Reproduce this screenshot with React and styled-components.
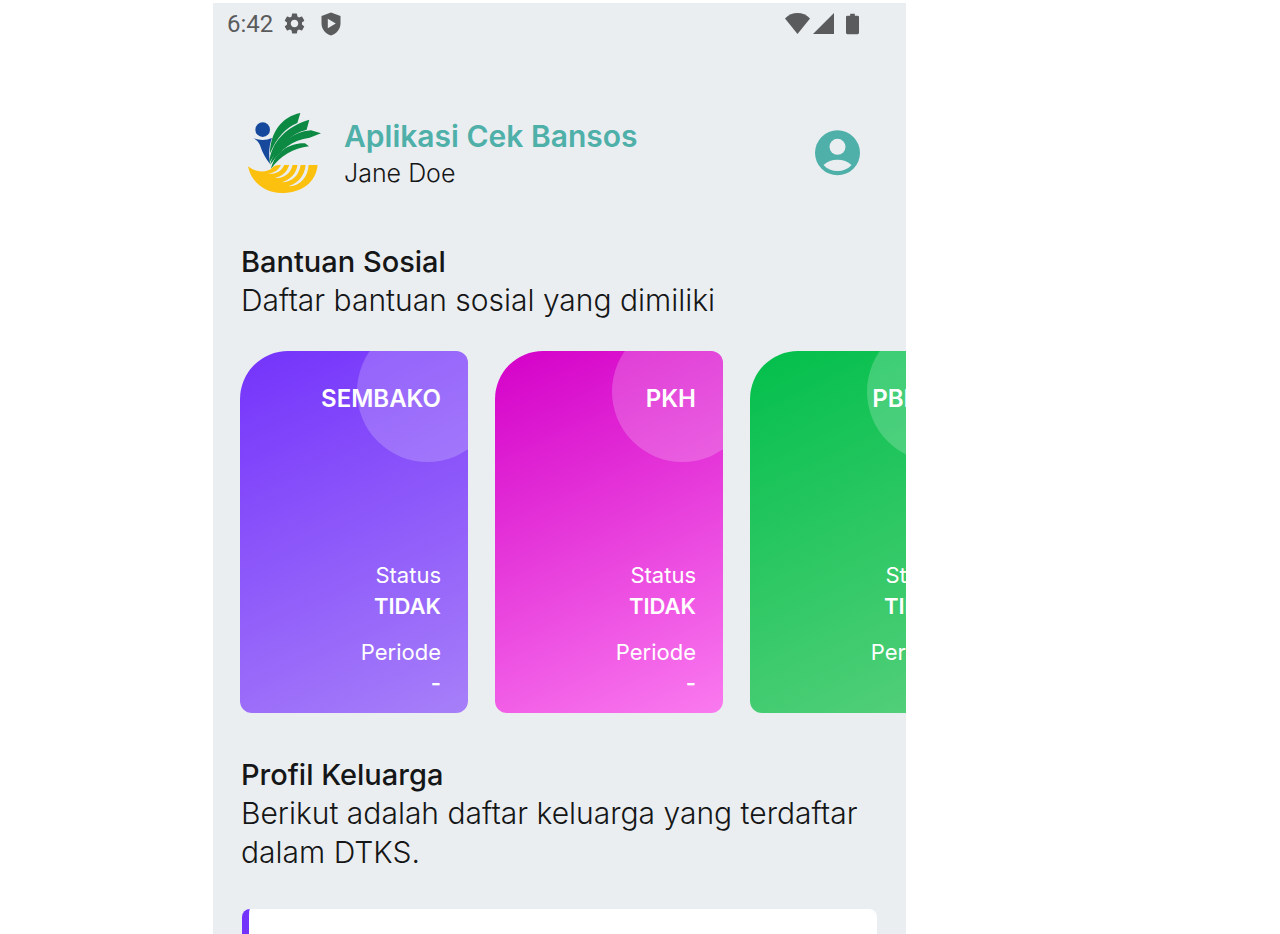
import React from "react";
import styled, { createGlobalStyle } from "styled-components";
import { MdSettings } from "react-icons/md";

const GlobalStyle = createGlobalStyle`
  * {
    box-sizing: border-box;
  }
  body {
    margin: 0;
    background: #ffffff;
    font-family: Inter, "Liberation Sans", sans-serif;
  }
  h1, h2, h3, p, dl, dt, dd {
    margin: 0;
  }
`;

// Benefit cards
const benefits = [
  { name: "SEMBAKO", status: "TIDAK", period: "-", from: "#7433fb", to: "#a77ff9" },
  { name: "PKH", status: "TIDAK", period: "-", from: "#d400c8", to: "#fa7aef" },
  { name: "PBI-JK", status: "TIDAK", period: "-", from: "#02bf4b", to: "#57d07c" },
];

const Page = styled.div`
  display: grid;
  grid-template-columns: 213fr 693fr 374fr;
  height: 100vh;
  padding-top: 3px;
`;

const Screen = styled.div`
  grid-column: 2;
  display: flex;
  flex-direction: column;
  min-width: 0;
  min-height: 0;
  overflow: hidden;
  background: #ebeef1;
  color: #151617;
`;

const StatusBar = styled.div`
  display: flex;
  align-items: center;
  justify-content: space-between;
  height: 41px;
  flex-shrink: 0;
  padding: 0 47px 0 14px;
  color: #5a5b5c;
`;

const StatusGroup = styled.div`
  display: flex;
  align-items: center;
  gap: ${(props) => props.$gap};
`;

const Clock = styled.span`
  font-family: Roboto, sans-serif;
  font-size: 24px;
  line-height: 28px;
`;

const Header = styled.header`
  display: flex;
  align-items: center;
  flex-shrink: 0;
  padding: 68px 45px 0 34px;
`;

const HeaderText = styled.div`
  flex: 1;
  margin-left: 22px;
`;

const AppTitle = styled.h1`
  font-size: 30px;
  line-height: 38px;
  font-weight: 600;
  color: #4fb0a9;
`;

const UserName = styled.p`
  font-size: 25px;
  line-height: 36px;
  font-weight: 300;
`;

const ProfileButton = styled.button`
  display: flex;
  padding: 0;
  border: none;
  background: none;
  color: #4fb0a9;
  cursor: pointer;
`;

const Section = styled.section`
  flex-shrink: 0;
  padding: ${(props) => props.$top} 28px 0;
`;

const SectionTitle = styled.h2`
  font-size: 29px;
  line-height: 39px;
  font-weight: 500;
`;

const SectionText = styled.p`
  font-size: 30px;
  line-height: 39px;
  font-weight: 300;
`;

const CardList = styled.div`
  display: flex;
  flex-shrink: 0;
  gap: 27px;
  margin-top: 31px;
  padding: 0 27px;
  overflow-x: auto;
  scrollbar-width: none;
`;

const Card = styled.article`
  position: relative;
  display: flex;
  flex-direction: column;
  flex: 0 0 228px;
  height: 362px;
  padding: 30px 27px 15px;
  overflow: hidden;
  text-align: right;
  color: #ffffff;
  border-radius: 48px 12px 12px 12px;
  background: linear-gradient(155deg, ${(props) => props.$from}, ${(props) => props.$to});
`;

const Bubble = styled.span`
  position: absolute;
  top: -30px;
  right: -30px;
  width: 141px;
  height: 141px;
  border-radius: 50%;
  background: rgba(255, 255, 255, 0.2);
`;

const CardName = styled.h3`
  position: relative;
  font-size: 24px;
  line-height: 36px;
  font-weight: 600;
  white-space: nowrap;
`;

const Details = styled.dl`
  margin-top: auto;
`;

const Label = styled.dt`
  font-size: 22px;
  line-height: 32px;
  font-weight: 400;
`;

const Value = styled.dd`
  font-size: 22px;
  line-height: 30px;
  font-weight: 600;

  &:not(:last-child) {
    margin-bottom: 15px;
  }
`;

const FamilyCard = styled.div`
  flex: 1 0 25px;
  margin: 37px 29px 0;
  border-left: 7px solid #7433fb;
  border-radius: 8px 8px 0 0;
  background: #ffffff;
`;

const ShieldIcon = () => (
  <svg width="20" height="24" viewBox="0 0 20 24" aria-hidden="true">
    <path
      fill="currentColor"
      fillRule="evenodd"
      d="M10 0.5 19.5 4v7.5c0 5.6-4 10.2-9.5 12-5.500-1.800-9.500-6.400-9.500-12V4ZM6.800 6.800v9.400l8-4.700Z"
    />
  </svg>
);

const WifiIcon = () => (
  <svg width="25" height="21" viewBox="0 0 25 21" aria-hidden="true">
    <path fill="currentColor" d="M0 5.500C7-1.800 18-1.800 25 5.500L12.500 21Z" />
  </svg>
);

const SignalIcon = () => (
  <svg width="21" height="21" viewBox="0 0 21 21" aria-hidden="true">
    <path fill="currentColor" d="M21 0v21H0Z" />
  </svg>
);

const BatteryIcon = () => (
  <svg width="13" height="22" viewBox="0 0 14 22" aria-hidden="true">
    <path
      fill="currentColor"
      d="M4.500 0h5v2h3a1.500 1.500 0 0 1 1.500 1.500v17a1.500 1.500 0 0 1-1.500 1.500h-11A1.500 1.500 0 0 1 0 20.500v-17A1.500 1.500 0 0 1 1.500 2h3Z"
    />
  </svg>
);

const AccountIcon = () => (
  <svg width="46" height="48" viewBox="0 0 46 48" aria-hidden="true">
    <circle cx="22.500" cy="22.800" r="22.500" fill="currentColor" />
    <circle cx="22.500" cy="16.800" r="8" fill="#ebeef1" />
    <path fill="#ebeef1" d="M8.500 35C15.500 28 29.500 28 36.500 35C29.500 43 15.500 43 8.500 35Z" />
  </svg>
);

const Logo = () => (
  <svg width="75" height="83" viewBox="36 36 225 249" role="img" aria-label="Logo">
    {/* person */}
    <circle cx="83" cy="89" r="22" fill="#16499c" />
    <path fill="#16499c" d="M53 113C71 122 93 122 111 114C103 132 100 160 105 192C92 175 82 158 75 136C71 125 65 119 53 113Z" />
    {/* leaves */}
    <g fill="#0c8a43">
      <path d="M105 160C106 98 140 50 196 39L187 69C152 84 126 112 105 160Z" />
      <path d="M103 188C108 124 157 78 223 59L215 89C168 100 134 137 103 188Z" />
      <path d="M105 195C120 137 172 95 228 91L258 100L224 113C172 119 136 150 105 195Z" />
      <path d="M108 206C120 156 164 128 210 130L222 139C174 146 138 166 108 206Z" />
    </g>
    {/* hand */}
    <path
      fill="#fcc10f"
      d="M39 199C62 217 94 220 112 203C118 196 126 194 138 195H248C242 248 202 279 139 279C91 279 48 247 39 199Z"
    />
    <g fill="#ebeef1">
      <path d="M138 194H148C140 214 121 224 99 221C118 218 131 210 138 194Z" />
      <path d="M163 194H173C168 219 146 236 119 234C142 229 156 216 163 194Z" />
      <path d="M188 194H197C193 225 171 247 140 247C166 239 183 222 188 194Z" />
      <path d="M212 194H221C219 232 195 258 160 259C188 250 209 228 212 194Z" />
    </g>
  </svg>
);

const App = () => {
  return (
    <Page>
      <GlobalStyle />
      <Screen>
        <StatusBar>
          <StatusGroup $gap="14px">
            <StatusGroup $gap="9px">
              <Clock>6:42</Clock>
              <MdSettings size={25} />
            </StatusGroup>
            <ShieldIcon />
          </StatusGroup>
          <StatusGroup $gap="3px">
            <WifiIcon />
            <StatusGroup $gap="12px">
              <SignalIcon />
              <BatteryIcon />
            </StatusGroup>
          </StatusGroup>
        </StatusBar>

        <Header>
          <Logo />
          <HeaderText>
            <AppTitle>Aplikasi Cek Bansos</AppTitle>
            <UserName>Jane Doe</UserName>
          </HeaderText>
          <ProfileButton type="button" aria-label="Profil">
            <AccountIcon />
          </ProfileButton>
        </Header>

        <Section $top="47px">
          <SectionTitle>Bantuan Sosial</SectionTitle>
          <SectionText>Daftar bantuan sosial yang dimiliki</SectionText>
        </Section>

        <CardList>
          {benefits.map((benefit) => (
            <Card key={benefit.name} $from={benefit.from} $to={benefit.to}>
              <Bubble />
              <CardName>{benefit.name}</CardName>
              <Details>
                <Label>Status</Label>
                <Value>{benefit.status}</Value>
                <Label>Periode</Label>
                <Value>{benefit.period}</Value>
              </Details>
            </Card>
          ))}
        </CardList>

        <Section $top="42px">
          <SectionTitle>Profil Keluarga</SectionTitle>
          <SectionText>Berikut adalah daftar keluarga yang terdaftar dalam DTKS.</SectionText>
        </Section>

        <FamilyCard />
      </Screen>
    </Page>
  );
};

export default App;
